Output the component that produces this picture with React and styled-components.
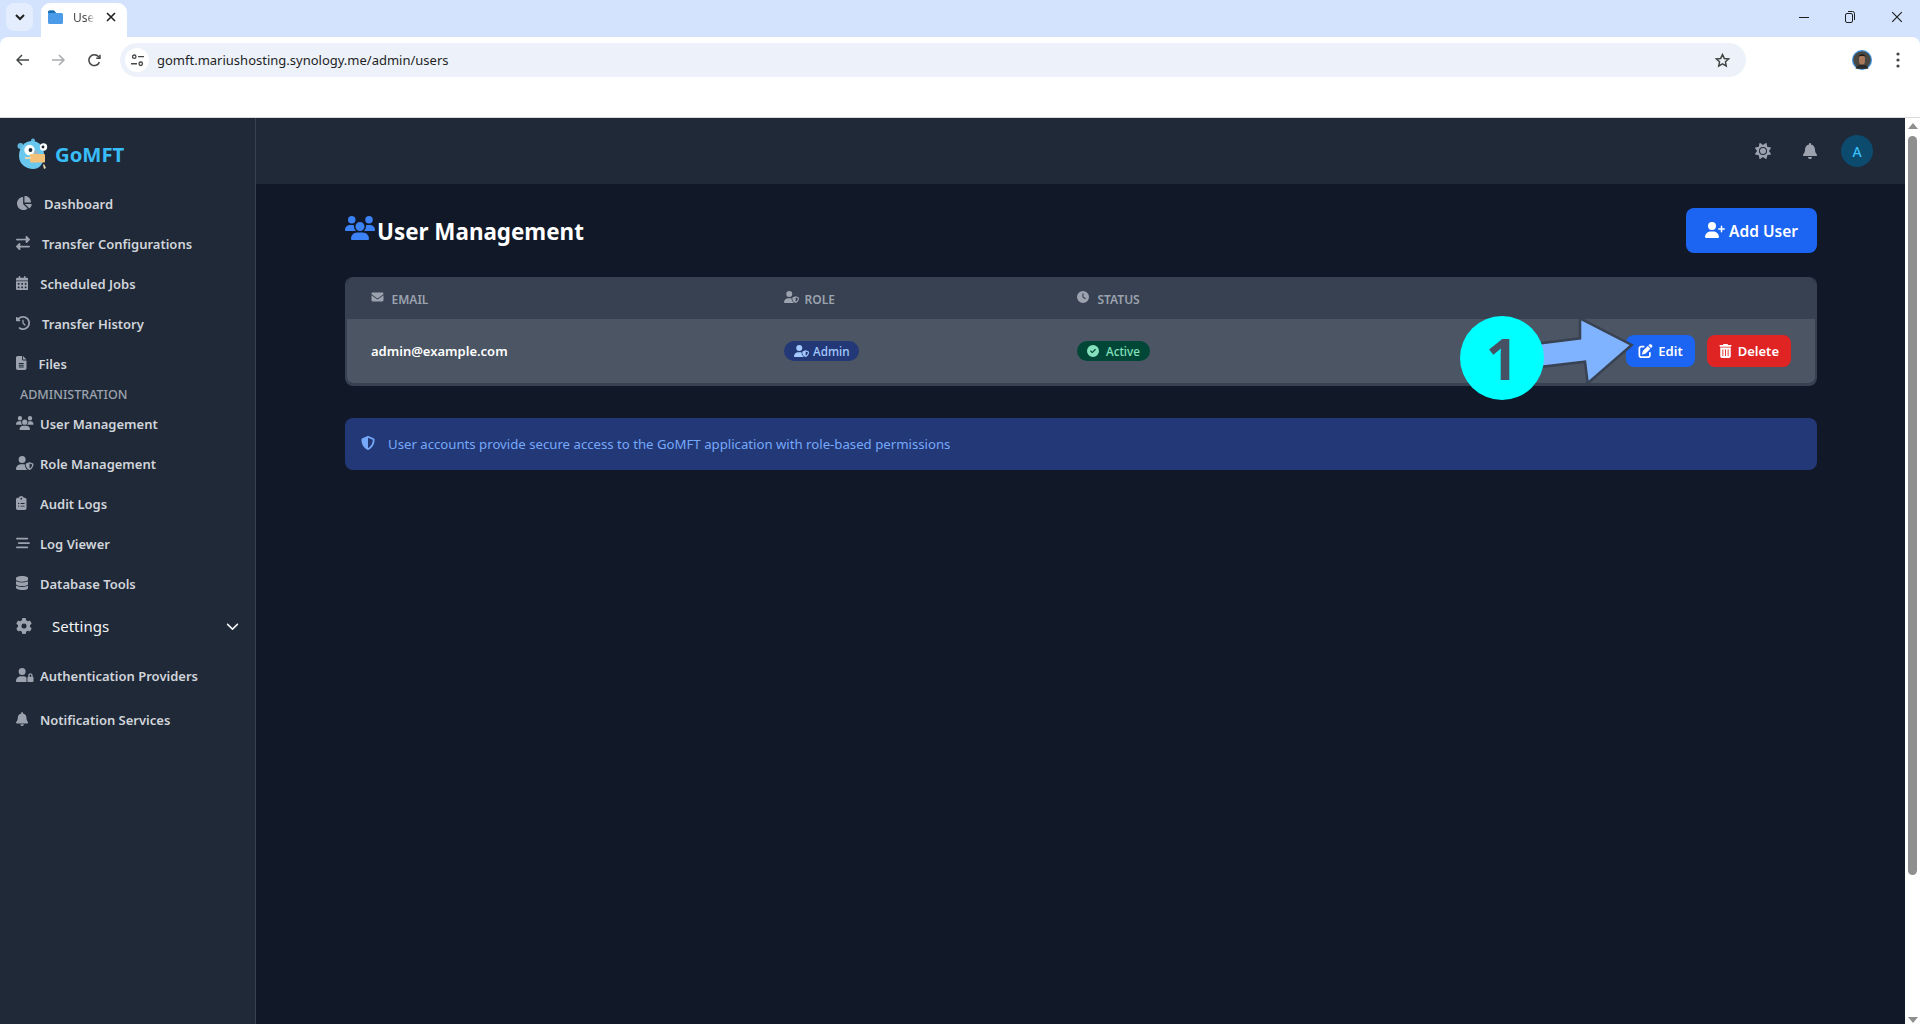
import React from "react";
import styled, { createGlobalStyle } from "styled-components";
import {
  FaChartPie, FaRightLeft, FaCalendarDays, FaClockRotateLeft, FaFileLines, FaUsers, FaUserShield,
  FaClipboardList, FaBarsStaggered, FaDatabase, FaGear, FaChevronDown, FaUserLock, FaBell, FaSun,
  FaEnvelope, FaClock, FaUserPlus, FaPenToSquare, FaTrashCan, FaCircleCheck, FaShieldHalved,
} from "react-icons/fa6";

const Global = createGlobalStyle`
  html, body { margin: 0; padding: 0; height: 100%; overflow: hidden; }
  body { font-family: "Noto Sans", "Open Sans", sans-serif; background: #111827; }
  * { box-sizing: border-box; }
`;

const Page = styled.div`
  position: relative; width: 1920px; height: 1024px; display: flex; flex-direction: column; overflow: hidden;
`;

/* Browser chrome */
const Browser = styled.header`
  height: 118px; flex: none; background: #d3e3fd; display: flex; flex-direction: column; border-bottom: 1px solid #d9d9d9;
`;
const TabStrip = styled.div`
  height: 37px; flex: none; display: flex; align-items: flex-start; padding: 3px 0 0 6px;
`;
const TabMenu = styled.div`
  width: 27px; height: 28px; border-radius: 8px; background: #e3edfd; color: #1f1f1f; display: flex; align-items: center; justify-content: center;
`;
const Tab = styled.div`
  margin-left: 8px; width: 86px; height: 34px; background: #fff; border-radius: 9px 9px 0 0; display: flex; align-items: center; padding: 0 11px 6px 7px;
`;
const TabTitle = styled.span`
  margin-left: 10px; font-size: 12px; color: #45474a; white-space: nowrap;
  mask-image: linear-gradient(to right, #000 55%, transparent 82%);
`;
const TabClose = styled.span`
  margin-left: auto; display: flex; color: #1f1f1f;
`;
const WindowButtons = styled.div`
  margin-left: auto; height: 28px; padding-right: 17px; display: flex; align-items: center; gap: 36px; color: #1f1f1f;
`;
const Toolbar = styled.div`
  height: 40px; flex: none; background: #fff; border-radius: 8px 8px 0 0; display: flex; align-items: center; padding: 6px 0 0 16px;
`;
const NavGlyphs = styled.div`
  width: 104px; display: flex; gap: 23px; align-items: center; color: #444746;
`;
const AddressBar = styled.div`
  width: 1626px; height: 34px; background: #edf2fa; border-radius: 17px; display: flex; align-items: center; padding: 0 16px 0 5px;
`;
const SiteChip = styled.div`
  width: 24px; height: 24px; border-radius: 50%; background: #fff; display: flex; align-items: center; justify-content: center; color: #444746;
`;
const Url = styled.span`
  margin-left: 8px; font-size: 13px; color: #1f1f1f; flex: 1; white-space: nowrap;
`;
const ToolbarEnd = styled.div`
  display: flex; align-items: center; margin-left: 106px; gap: 24px;
`;
const BookmarkSpace = styled.div`
  flex: 1; background: #fff;
`;

/* App */
const Body = styled.div`
  flex: 1; min-height: 0; display: flex;
`;
const Sidebar = styled.aside`
  width: 256px; flex: none; background: #1f2937; border-right: 1px solid #374151; display: flex; flex-direction: column;
`;
const Brand = styled.div`
  height: 66px; display: flex; align-items: center; padding: 5px 0 0 16px; gap: 5px; flex: none;
`;
const BrandName = styled.span`
  font-size: 20.3px; font-weight: 700; color: #38bdf8; margin-top: 1px;
`;
const NavRow = styled.a`
  height: ${p => p.$h || 40}px; flex: none; display: flex; align-items: center; padding-left: 16px; color: #d1d5db; font-size: 13px; font-weight: 600;
  svg { height: 14px; width: ${p => p.$w}px; color: #9ca3af; margin: -2px 12px 0 0; flex: none; }
`;
const IconSlot = styled.span`
  width: 24px; flex: none; display: flex; align-items: center;
  svg { margin-right: 0; }
`;
const SectionLabel = styled.div`
  height: 20px; flex: none; padding: 1px 0 0 20px; font-size: 12.5px; line-height: 20px; font-weight: 500; color: #9ca3af; text-transform: uppercase;
`;
const SettingsRow = styled.div`
  height: 44px; flex: none; margin-bottom: 6px; display: flex; align-items: center; padding: 0 16px; color: #f3f4f6; font-size: 15px;
  svg { color: #9ca3af; height: 16px; width: 16px; margin-right: 20px; }
  svg:last-child { margin: 0 0 0 auto; color: #f3f4f6; height: 14px; width: 13px; }
`;
const Right = styled.div`
  flex: 1; min-width: 0; display: flex; flex-direction: column;
`;
const TopBar = styled.div`
  height: 66px; flex: none; background: #1f2937; display: flex; align-items: center; padding-right: 32px; gap: 15px; justify-content: flex-end; color: #9ca3af;
`;
const TopIcon = styled.span`
  width: 32px; display: flex; justify-content: center;
  svg { height: 16px; width: 16px; }
`;
const Avatar = styled.div`
  width: 32px; height: 32px; border-radius: 50%; background: #0c4a6e; color: #38bdf8; font-size: 14px; font-weight: 500; display: flex; align-items: center; justify-content: center;
`;
const Main = styled.main`
  flex: 1; padding: 24px 88px 0 89px; background: #111827;
`;
const TitleRow = styled.div`
  height: 45px; margin-bottom: 24px; display: flex; align-items: center; justify-content: space-between;
`;
const Title = styled.h1`
  margin: 1px 0 0; display: flex; align-items: center; color: #fff; font-size: 22.4px; font-weight: 700;
  svg { color: #3b82f6; height: 24px; width: 30px; margin: -6px 2px 0 0; }
`;
const AddButton = styled.button`
  width: 131px; height: 45px; border: 0; border-radius: 8px; background: #1c64f2; color: #fff; font: 600 15.5px "Noto Sans", sans-serif; display: flex; align-items: center; justify-content: center; gap: 4px;
  svg { height: 16px; width: 20px; margin-top: -2px; }
`;
const TableBox = styled.section`
  height: 109px; border: solid #374151; border-width: 0 2px 3px; border-radius: 8px; overflow: hidden;
`;
const grid = "413px 293px 1fr auto";
const HeadRow = styled.div`
  height: 42px; background: #374151; display: grid; grid-template-columns: ${grid}; align-items: center; padding: 2px 24px 0 24px;
`;
const HeadCell = styled.div`
  display: flex; align-items: center; color: #9ca3af; font-size: 12px; font-weight: 600; text-transform: uppercase;
`;
const HeadIcon = styled.span`
  width: 20.5px; display: flex; margin-top: -5px;
  svg { height: 12px; width: ${p => p.$w || 13}px; }
`;
const DataRow = styled.div`
  height: 64px; background: #4b5563; display: grid; grid-template-columns: ${grid}; align-items: center; padding: 0 24px 0 24px;
`;
const Email = styled.div`
  color: #fff; font-size: 13px; font-weight: 600;
`;
const Badge = styled.span`
  justify-self: start; height: 20px; padding: 0 10px; border-radius: 10px; display: inline-flex; align-items: center; gap: ${p => (p.$green ? 7 : 4)}px; font-size: 11.7px; font-weight: 500;
  background: ${p => (p.$green ? "#014737" : "#233876")}; color: ${p => (p.$green ? "#84e1bc" : "#a4cafe")};
  svg { height: 12px; width: ${p => (p.$green ? 12 : 15)}px; }
`;
const Actions = styled.div`
  display: flex; gap: 12px;
`;
const ActionButton = styled.button`
  height: 32px; border: 0; border-radius: 8px; padding: 0 12px; background: ${p => (p.$red ? "#e02424" : "#1c64f2")}; color: #fff; font: 600 13px "Noto Sans", sans-serif; display: flex; align-items: center; gap: ${p => (p.$red ? 6 : 5)}px;
  svg { height: 14px; width: ${p => (p.$red ? 13 : 15)}px; }
`;
const Alert = styled.div`
  height: 52px; margin-top: 32px; border-radius: 8px; background: #233876; color: #76a9fa; font-size: 13.2px; display: flex; align-items: center; padding-left: 16px; gap: 13px;
  svg { height: 14px; width: 14px; margin-top: -2px; }
`;
const Scrollbar = styled.div`
  width: 15px; flex: none; background: #fff; display: flex; flex-direction: column; align-items: center; padding-top: 5px;
`;
const ScrollThumb = styled.div`
  width: 9px; height: 739px; margin-top: 7px; background: #8f8f8f; border-radius: 5px;
`;
const ArrowUp = styled.div`
  width: 0; height: 0; border: solid transparent; border-width: 0 5px 6px; border-bottom-color: #8f8f8f;
`;
const ArrowDown = styled(ArrowUp)`
  margin-top: auto; margin-bottom: 1px; border-width: 6px 5px 0; border-top-color: #8f8f8f; border-bottom-color: transparent;
`;
const Callout = styled.div`
  position: absolute; left: 1460px; top: 316px; width: 84px; height: 84px; border-radius: 50%; background: #00ffff; display: flex; align-items: center; justify-content: center;
  color: #465264; font: 700 57px/1 "Noto Sans", sans-serif;
`;
const ArrowMark = styled.svg`
  position: absolute; left: 1530px; top: 310px; width: 110px; height: 80px;
`;

const Gopher = () => (
  <svg width="34" height="34" viewBox="0 0 34 34">
    <circle cx="4.5" cy="9" r="3" fill="#5fb6dc" />
    <circle cx="17" cy="3.5" r="2" fill="#5fb6dc" />
    <path d="M3 19C3 10 9 4 16 4s12 6 12 14-4 14-11 14S3 27 3 19z" fill="#6ac7ee" />
    <circle cx="13.5" cy="13" r="5.2" fill="#fff" />
    <circle cx="27.5" cy="10" r="3.7" fill="#fff" />
    <circle cx="14.5" cy="13" r="1.9" fill="#1a2a36" />
    <circle cx="27" cy="10" r="1.4" fill="#1a2a36" />
    <rect x="14" y="17" width="15" height="8.5" rx="1" fill="#f2c27a" />
    <rect x="18" y="14" width="4" height="3" fill="#9db4bf" />
    <path d="M9 20h6v2H9zM28 27l2 4-2 1-1-4z" fill="#e8d6b0" />
  </svg>
);
const Folder = () => (
  <svg width="15" height="14" viewBox="0 0 15 14"><path d="M0 2a1.5 1.5 0 0 1 1.5-1.5H6L8 3h5.5A1.5 1.5 0 0 1 15 4.5v8a1.5 1.5 0 0 1-1.5 1.5h-12A1.5 1.5 0 0 1 0 12.5z" fill="#4c9be8" /><path d="M0 2a1.5 1.5 0 0 1 1.5-1.5H6L8 3H0z" fill="#1a6fb5" /></svg>
);
const Chevron = () => (
  <svg width="10" height="7" viewBox="0 0 10 7" fill="none" stroke="currentColor" strokeWidth="2"><path d="M1 1l4 4 4-4" /></svg>
);
const Cross = ({ s = 10, w = 1.6 }) => (
  <svg width={s} height={s} viewBox="0 0 10 10" stroke="currentColor" strokeWidth={w}><path d="M1 1l8 8M9 1l-8 8" /></svg>
);
const Back = () => (
  <svg width="13" height="12" viewBox="0 0 13 12" fill="none" stroke="currentColor" strokeWidth="1.5"><path d="M13 6H1M6 1L1 6l5 5" /></svg>
);
const Forward = () => (
  <svg width="13" height="12" viewBox="0 0 13 12" fill="none" stroke="#a8abad" strokeWidth="1.5"><path d="M0 6h12M7 1l5 5-5 5" /></svg>
);
const Reload = () => (
  <svg width="13" height="13" viewBox="0 0 12 12" fill="none" stroke="currentColor" strokeWidth="1.4"><path d="M10.5 7.5A5 5 0 1 1 9.6 2.4L11 4" /><path d="M11 .6V4H7.6" /></svg>
);
const Tune = () => (
  <svg width="13" height="13" viewBox="0 0 12 12" fill="none" stroke="currentColor" strokeWidth="1.2"><circle cx="3" cy="2.5" r="1.6" /><path d="M6.5 2.5H12M0 9h5.5" /><circle cx="9" cy="9" r="1.6" /></svg>
);
const Star = () => (
  <svg width="15" height="15" viewBox="0 0 24 24" fill="none" stroke="#444746" strokeWidth="2.4"><path d="M12 2.5l2.9 6.2 6.8.8-5 4.6 1.3 6.7-6-3.3-6 3.3 1.3-6.7-5-4.6 6.8-.8z" /></svg>
);
const Profile = () => (
  <svg width="20" height="20" viewBox="0 0 17 17"><circle cx="8.5" cy="8.5" r="8.5" fill="#3b8ed6" /><circle cx="8.5" cy="8.5" r="7.4" fill="#4a4742" /><path d="M6 6c0-2 5-2.5 5 0v3.5c0 2-1 3-2.5 3S6 11.500 6 9.500z" fill="#a9795c" /><path d="M5.500 6c0-3 6-3.200 6 0l-1.500-1H7z" fill="#211c18" /><path d="M3 16c1-3 3-3.500 5.500-3.500S13 13 14 16z" fill="#2a2a2a" /></svg>
);
const Kebab = () => (
  <svg width="4" height="16" viewBox="0 0 4 16" fill="#444746"><circle cx="2" cy="2" r="1.6" /><circle cx="2" cy="8" r="1.6" /><circle cx="2" cy="14" r="1.6" /></svg>
);
const Minimize = () => (
  <svg width="10" height="10" viewBox="0 0 10 10" stroke="currentColor"><path d="M0 5.5h10" /></svg>
);
const Restore = () => (
  <svg width="10" height="12" viewBox="0 0 10 12" fill="none" stroke="currentColor"><rect x=".5" y="2.5" width="7" height="9" rx="1.5" /><path d="M3 .5h4.5a2 2 0 0 1 2 2V9" /></svg>
);

const mainNav = [
  [FaChartPie, "Dashboard", 16],
  [FaRightLeft, "Transfer Configurations", 14],
  [FaCalendarDays, "Scheduled Jobs", 12.25],
  [FaClockRotateLeft, "Transfer History", 14],
  [FaFileLines, "Files", 10.5],
];
const adminNav = [
  [FaUsers, "User Management", 17.5],
  [FaUserShield, "Role Management", 17.5],
  [FaClipboardList, "Audit Logs", 10.5],
  [FaBarsStaggered, "Log Viewer", 14],
  [FaDatabase, "Database Tools", 12.25],
];
const settingsNav = [
  [FaUserLock, "Authentication Providers", 17.5],
  [FaBell, "Notification Services", 12.25],
];

export default function App() {
  return (
    <Page>
      <Global />
      <Browser>
        <TabStrip>
          <TabMenu><Chevron /></TabMenu>
          <Tab>
            <Folder />
            <TabTitle>User</TabTitle>
            <TabClose><Cross /></TabClose>
          </Tab>
          <WindowButtons>
            <Minimize />
            <Restore />
            <Cross s={12} w={1} />
          </WindowButtons>
        </TabStrip>
        <Toolbar>
          <NavGlyphs><Back /><Forward /><Reload /></NavGlyphs>
          <AddressBar>
            <SiteChip><Tune /></SiteChip>
            <Url>gomft.mariushosting.synology.me/admin/users</Url>
            <Star />
          </AddressBar>
          <ToolbarEnd><Profile /><Kebab /></ToolbarEnd>
        </Toolbar>
        <BookmarkSpace />
      </Browser>
      <Body>
        <Sidebar>
          <Brand><Gopher /><BrandName>GoMFT</BrandName></Brand>
          {mainNav.map(([I, t, w]) => <NavRow key={t} $w={w}><I />{t}</NavRow>)}
          <SectionLabel>Administration</SectionLabel>
          {adminNav.map(([I, t, w]) => <NavRow key={t} $w={w}><IconSlot><I /></IconSlot>{t}</NavRow>)}
          <SettingsRow><FaGear /><span>Settings</span><FaChevronDown /></SettingsRow>
          {settingsNav.map(([I, t, w]) => <NavRow key={t} $h={44} $w={w}><IconSlot><I /></IconSlot>{t}</NavRow>)}
        </Sidebar>
        <Right>
          <TopBar>
            <TopIcon><FaSun /></TopIcon>
            <TopIcon><FaBell /></TopIcon>
            <Avatar>A</Avatar>
          </TopBar>
          <Main>
            <TitleRow>
              <Title><FaUsers />User Management</Title>
              <AddButton><FaUserPlus />Add User</AddButton>
            </TitleRow>
            <TableBox>
              <HeadRow>
                <HeadCell><HeadIcon><FaEnvelope /></HeadIcon>Email</HeadCell>
                <HeadCell><HeadIcon $w={15}><FaUserShield /></HeadIcon>Role</HeadCell>
                <HeadCell><HeadIcon $w={12}><FaClock /></HeadIcon>Status</HeadCell>
                <div />
              </HeadRow>
              <DataRow>
                <Email>admin@example.com</Email>
                <Badge><FaUserShield />Admin</Badge>
                <Badge $green><FaCircleCheck />Active</Badge>
                <Actions>
                  <ActionButton><FaPenToSquare />Edit</ActionButton>
                  <ActionButton $red><FaTrashCan />Delete</ActionButton>
                </Actions>
              </DataRow>
            </TableBox>
            <Alert><FaShieldHalved />User accounts provide secure access to the GoMFT application with role-based permissions</Alert>
          </Main>
        </Right>
        <Scrollbar>
          <ArrowUp />
          <ScrollThumb />
          <ArrowDown />
        </Scrollbar>
      </Body>
      <ArrowMark viewBox="1530 310 110 80">
        <path d="M1535 344L1580 338.3V318.3L1631.7 345L1587.7 383.3L1585 361.7L1535 367.5Z" fill="#80b3ff" stroke="#384252" strokeWidth="2.5" />
      </ArrowMark>
      <Callout>1</Callout>
    </Page>
  );
}
